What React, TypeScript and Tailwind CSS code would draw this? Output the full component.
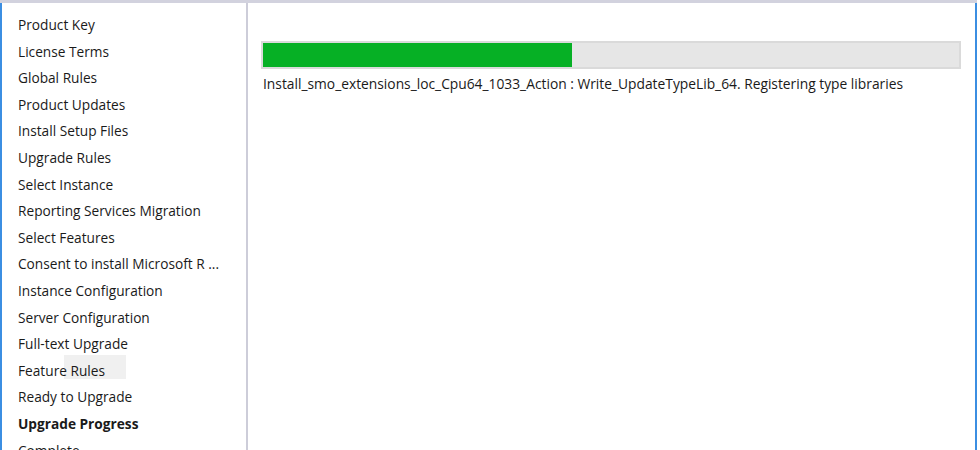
import React from "react";

const steps = [
  "Product Key",
  "License Terms",
  "Global Rules",
  "Product Updates",
  "Install Setup Files",
  "Upgrade Rules",
  "Select Instance",
  "Reporting Services Migration",
  "Select Features",
  "Consent to install Microsoft R ...",
  "Instance Configuration",
  "Server Configuration",
  "Full-text Upgrade",
  "Feature Rules",
  "Ready to Upgrade",
  "Upgrade Progress",
  "Complete",
];

const current = "Upgrade Progress";

export default function App() {
  return (
    <div
      className="w-[980px] h-[450px] bg-white overflow-hidden flex text-[#1a1a1a]"
      style={{ fontFamily: '"Open Sans", "Noto Sans", sans-serif' }}
    >
      <div className="w-[977px] h-full flex flex-col border-t-[3px] border-[#d2d2de]">
        <div className="flex flex-1 min-h-0">
          {/* Step list */}
          <div className="relative w-[246px] shrink-0 border-l-2 border-[#3b8ee2] pt-[9px] pl-4">
            <div className="absolute left-[62px] top-[352px] w-[62px] h-[24px] bg-[#f0f0f0]" />
            {steps.map((s) => (
              <div
                key={s}
                className={
                  "relative h-[26.6px] flex items-center text-[13.7px] whitespace-nowrap " +
                  (s === current ? "font-bold" : "")
                }
              >
                {s}
              </div>
            ))}
          </div>

          {/* Separator */}
          <div className="w-[2px] shrink-0 bg-[#cdcdd9]" />

          {/* Main */}
          <div className="flex-1 pl-[13px] pt-[38px] pr-[14px]">
            <div className="h-[28px] border-2 border-[#dadada] bg-[#e6e6e6] w-[700px]">
              <div className="h-full w-[309px] bg-[#06b025]" />
            </div>
            <div className="mt-[5px] pl-[2px] text-[13.8px] leading-[20px] whitespace-nowrap">
              Install_smo_extensions_loc_Cpu64_1033_Action : Write_UpdateTypeLib_64. Registering type libraries
            </div>
          </div>

          {/* Right border */}
          <div className="w-[2px] shrink-0 bg-[#3b8ee2]" />
        </div>
      </div>
    </div>
  );
}
